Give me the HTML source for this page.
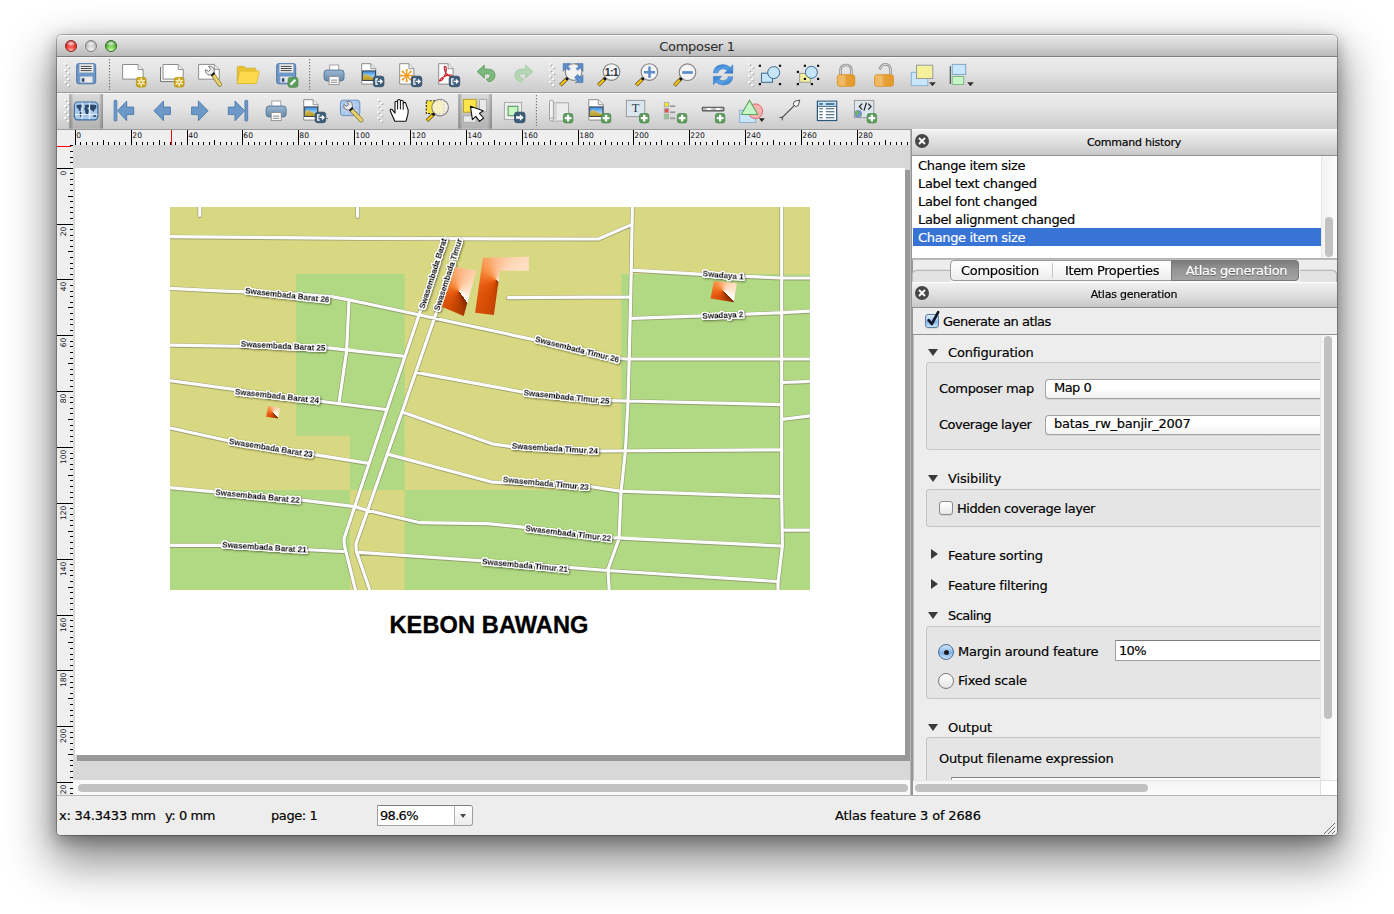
<!DOCTYPE html>
<html><head><meta charset="utf-8"><title>Composer 1</title>
<style>
*{box-sizing:border-box;margin:0;padding:0}
html,body{width:1394px;height:914px;overflow:hidden;background:#fff}
body{position:relative;font-family:"DejaVu Sans","Liberation Sans",sans-serif;font-size:13px;letter-spacing:-0.27px;color:#000;-webkit-text-stroke:.17px}
.a{position:absolute}
svg{overflow:hidden}
svg text{font-family:"DejaVu Sans","Liberation Sans",sans-serif}
svg .ml text{font-family:"Liberation Sans",sans-serif}
#win{left:57px;top:35px;width:1280px;height:800px;border-radius:5px 5px 4px 4px;background:#ededed;
 box-shadow:0 0 0 1px rgba(0,0,0,.26),0 22px 46px 6px rgba(0,0,0,.46),0 5px 16px 1px rgba(0,0,0,.3)}
#title{left:57px;top:35px;width:1280px;height:22px;border-radius:5px 5px 0 0;background:linear-gradient(#e9e9e9,#cfcfcf 60%,#b9b9b9);border-bottom:1px solid #7c7c7c;box-shadow:inset 0 1px 0 #f6f6f6}
#title span{left:0;width:1280px;top:2.5px;text-align:center;font-size:13px;color:#303030;letter-spacing:-0.3px;-webkit-text-stroke:.08px}
.tl{width:12px;height:12px;border-radius:6px;top:5px}
.tbar{left:57px;width:1280px;height:36px;background:linear-gradient(#ececec,#e4e4e4 40%,#cbcbcb);border-bottom:1px solid #9c9c9c;box-shadow:inset 0 1px 0 #f6f6f6}
#status{left:57px;top:795px;width:1280px;height:40px;background:#ededed;border-top:1px solid #b4b4b4;border-radius:0 0 4px 4px}
.t{white-space:nowrap;line-height:16px;margin-top:1px}
.dt{left:912px;width:425px;background:linear-gradient(#f1f1f1,#dcdcdc 55%,#c8c8c8);border-top:1px solid #fcfcfc;border-bottom:1px solid #8e8e8e}
.dt span{left:9.5px;width:100%;text-align:center;font-size:11px;letter-spacing:-0.28px;line-height:14px}
.cb{width:14px;height:14px}
.row{left:913px;width:408px;height:18px;padding-left:5px;line-height:19px;white-space:nowrap}
.gb{border:1px solid #c6c6c6;border-right:none;border-radius:4px 0 0 4px;background:#e5e5e5;left:926px;width:394px}
.combo{height:20px;border:1px solid #a3a3a3;border-right:none;border-radius:4px 0 0 4px;background:linear-gradient(#fff,#fff 45%,#f1f1f1);box-shadow:0 1px 0 rgba(0,0,0,.08);padding-left:8px;line-height:16px;white-space:nowrap}
.tri-d{width:0;height:0;border-left:5.5px solid transparent;border-right:5.5px solid transparent;border-top:7px solid #3a3a3a}
.tri-r{width:0;height:0;border-top:5.5px solid transparent;border-bottom:5.5px solid transparent;border-left:7px solid #3a3a3a}
.chk{width:14px;height:14px;border:1px solid #8b8b8b;border-radius:3px;background:linear-gradient(#fff,#e9e9e9);box-shadow:0 1px 0 rgba(0,0,0,.08)}
.rad{width:16px;height:16px;border:1px solid #7d7d7d;border-radius:8px;background:linear-gradient(#fff,#e4e4e4)}
</style></head><body>
<div id="win" class="a"></div>
<div id="title" class="a">
 <div class="a tl" style="left:8px;background:radial-gradient(ellipse 55% 34% at 50% 24%,rgba(255,255,255,.85),rgba(255,255,255,0) 100%),radial-gradient(circle at 50% 100%,#ffc6be 0,#ff5d52 34%,#e12c26 60%,#8e1511 100%);border:1px solid #8f2019"></div>
 <div class="a tl" style="left:28px;background:radial-gradient(ellipse 55% 34% at 50% 24%,rgba(255,255,255,.9),rgba(255,255,255,0) 100%),radial-gradient(circle at 50% 100%,#f6f6f6 0,#dedede 34%,#bfbfbf 60%,#7c7c7c 100%);border:1px solid #7e7e7e"></div>
 <div class="a tl" style="left:48px;background:radial-gradient(ellipse 55% 34% at 50% 24%,rgba(255,255,255,.85),rgba(255,255,255,0) 100%),radial-gradient(circle at 50% 100%,#dcf9c6 0,#90dd6c 34%,#50b132 60%,#205f15 100%);border:1px solid #2f6f22"></div>
 <span class="a t" style="letter-spacing:-0.31px">Composer 1</span>
</div>
<div id="tb1" class="a tbar" style="top:57px"></div>
<div id="tb2" class="a tbar" style="top:93px;height:37px"></div>
<svg class="a" style="left:57px;top:57px" width="1280" height="72" viewBox="57 57 1280 72"><defs><linearGradient id="gpr" x1="0" y1="0" x2="0" y2="1"><stop offset="0" stop-color="#9db7d0"/><stop offset="1" stop-color="#6488ac"/></linearGradient><linearGradient id="gsky" x1="0" y1="0" x2="0" y2="1"><stop offset="0" stop-color="#2f86dc"/><stop offset=".7" stop-color="#b8dcf6"/><stop offset="1" stop-color="#e8f2f8"/></linearGradient><linearGradient id="ghill" x1="0" y1="0" x2="0" y2="1"><stop offset="0" stop-color="#d6c266"/><stop offset="1" stop-color="#b89a22"/></linearGradient><linearGradient id="glock" x1="0" y1="0" x2="1" y2="0"><stop offset="0" stop-color="#f0b559"/><stop offset=".35" stop-color="#efbc6c"/><stop offset=".55" stop-color="#e6a035"/><stop offset="1" stop-color="#e39a2c"/></linearGradient><linearGradient id="gref" x1="0" y1="0" x2="1" y2="1"><stop offset="0" stop-color="#2f78cc"/><stop offset=".5" stop-color="#5aa0e6"/><stop offset="1" stop-color="#2f78cc"/></linearGradient><linearGradient id="gpress" x1="0" y1="0" x2="0" y2="1"><stop offset="0" stop-color="#dadada"/><stop offset="1" stop-color="#b2b2b2"/></linearGradient><linearGradient id="gpe" x1="0" y1="0" x2="1" y2="0"><stop offset="0" stop-color="#000" stop-opacity=".28"/><stop offset=".12" stop-color="#000" stop-opacity="0"/><stop offset=".88" stop-color="#000" stop-opacity="0"/><stop offset="1" stop-color="#000" stop-opacity=".28"/></linearGradient></defs><g><rect x="65.3" y="100.2" width="1.9" height="1.9" fill="#b4b4b4"/><rect x="64.2" y="99.1" width="1.9" height="1.9" fill="#fcfcfc"/><rect x="68.3" y="103.2" width="1.9" height="1.9" fill="#b4b4b4"/><rect x="67.2" y="102.1" width="1.9" height="1.9" fill="#fcfcfc"/><rect x="65.3" y="106.2" width="1.9" height="1.9" fill="#b4b4b4"/><rect x="64.2" y="105.1" width="1.9" height="1.9" fill="#fcfcfc"/><rect x="68.3" y="109.2" width="1.9" height="1.9" fill="#b4b4b4"/><rect x="67.2" y="108.1" width="1.9" height="1.9" fill="#fcfcfc"/><rect x="65.3" y="112.2" width="1.9" height="1.9" fill="#b4b4b4"/><rect x="64.2" y="111.1" width="1.9" height="1.9" fill="#fcfcfc"/><rect x="68.3" y="115.2" width="1.9" height="1.9" fill="#b4b4b4"/><rect x="67.2" y="114.1" width="1.9" height="1.9" fill="#fcfcfc"/><rect x="65.3" y="118.2" width="1.9" height="1.9" fill="#b4b4b4"/><rect x="64.2" y="117.1" width="1.9" height="1.9" fill="#fcfcfc"/><rect x="68.3" y="121.2" width="1.9" height="1.9" fill="#b4b4b4"/><rect x="67.2" y="120.1" width="1.9" height="1.9" fill="#fcfcfc"/><rect x="69.4" y="94" width="33.6" height="34.6" fill="url(#gpress)"/><rect x="69.4" y="94" width="33.6" height="34.6" fill="url(#gpe)"/><rect x="74.300" y="102" width="23.600" height="17.800" rx="3.600" fill="#a9c9ea" stroke="#3a6a9c" stroke-width="1.2"/><path d="M76.6 105.1L81.6 104.6L82.6 107.1L80.6 108.6L81.1 110.6L79.3 111.1L78.1 108.6L76.6 107.6ZM79.9 111.6L82.1 112.6L81.6 115.6L80.3 117.6L79.6 114.6ZM84.6 105.1L88.6 104.6L89.1 107.1L87.1 108.1L88.9 110.1L88.3 113.6L86.9 116.1L85.6 113.6L85.1 110.6L84.1 108.6L85.3 107.1ZM89.6 104.6L96.2 105.1L96.4 108.1L94.7 109.6L93.7 112.1L92.2 110.6L90.6 110.1L89.6 107.6ZM93.2 114.9L96.0 114.6L96.2 116.6L93.7 116.9Z" fill="#27486b"/><path d="M82.100 102.600V119.200M89.600 102.600V119.200M74.900 114.600H97.300" stroke="#f2f7fc" stroke-width="1" fill="none"/><rect x="114.100" y="100.300" width="2.800" height="20.800" rx=".8" fill="#6d99c9" stroke="#4c79ab" stroke-width=".8"/><path d="M117.6 110.7L126.7 101V107.1H133.7V114.6H126.7V120.8Z" fill="#6d99c9" stroke="#4c79ab" stroke-width=".9" stroke-linejoin="round"/><path d="M154 110.7L163.5 101V107.1H170.4V114.6H163.5V120.8Z" fill="#6d99c9" stroke="#4c79ab" stroke-width=".9" stroke-linejoin="round"/><path d="M208.100 110.700L198.400 101V107.100H191.600V114.600H198.400V120.800Z" fill="#6d99c9" stroke="#4c79ab" stroke-width=".9" stroke-linejoin="round"/><path d="M244.600 110.700L235 101V107.100H228.300V114.600H235V120.800Z" fill="#6d99c9" stroke="#4c79ab" stroke-width=".9" stroke-linejoin="round"/><rect x="244.900" y="100.300" width="2.800" height="20.800" rx=".8" fill="#6d99c9" stroke="#4c79ab" stroke-width=".8"/><rect x="271.8" y="101" width="9" height="7.5" fill="#fff" stroke="#9a9a9a" stroke-width=".9"/><rect x="266.2" y="106.1" width="19.9" height="10.8" rx="2.8" fill="url(#gpr)" stroke="#58789a" stroke-width="1"/><rect x="271.2" y="112.6" width="10" height="8" fill="#fff" stroke="#8d8d8d" stroke-width=".9"/><path d="M273 116.1h6.4M273 118.3h6.4" stroke="#8a8a8a" stroke-width="1" fill="none"/><path d="M303.7 99.7H313.1L318.1 104.7V120.1H303.7Z" fill="#fff" stroke="#8c8c8c" stroke-width="1"/><path d="M313.1 99.7V104.7H318.1" fill="#ececec" stroke="#8c8c8c" stroke-width=".9" stroke-linejoin="round"/><rect x="304.6" y="106.9" width="13.1" height="9.6" fill="url(#gsky)" stroke="#3c4650" stroke-width="1"/><path d="M305.1 116V112.1L307.8 109.7L311.1 111.7L317.2 114.3V116Z" fill="url(#ghill)"/><rect x="315.2" y="112.2" width="10.5" height="10.5" rx="2.4" fill="#3e5d79" stroke="#2d4b66" stroke-width=".8"/><path d="M319.8 114.8H317.8V120.1H319.8" stroke="#fff" stroke-width="1.3" fill="none"/><path d="M319.4 117.45H323.8M321.9 115.4L324 117.45L321.9 119.5" stroke="#fff" stroke-width="1.3" fill="none"/><path d="M326.200 118H328L327.100 119.200Z" fill="#333"/><rect x="340.400" y="100.200" width="19.400" height="15.400" rx="2.600" fill="#a9c5e9" stroke="#6c92c2" stroke-width="1"/><path d="M346.600 100.800V115M353.800 100.800V115M341 105.200H359.200M341 110.600H359.200" stroke="#c9dcf2" stroke-width=".8" fill="none"/><path d="M351.2 109.8L361.3 120.2" stroke="#7a6a2c" stroke-width="4.4" stroke-linecap="round"/><path d="M351.4 110L361.3 120.2" stroke="#e6d16c" stroke-width="3.1" stroke-linecap="round"/><path d="M346.8 101.4A4.4 4.4 0 1 1 343.8 104.6L346.8 106.4L348.9 104.3Z" fill="#ececec" stroke="#6a6a6a" stroke-width=".9" stroke-linejoin="round"/><path d="M349.7 110.7L352.9 107.7" stroke="#1a1a1a" stroke-width="1.9"/><rect x="378.4" y="100.2" width="1.9" height="1.9" fill="#b4b4b4"/><rect x="377.3" y="99.1" width="1.9" height="1.9" fill="#fcfcfc"/><rect x="381.4" y="103.2" width="1.9" height="1.9" fill="#b4b4b4"/><rect x="380.3" y="102.1" width="1.9" height="1.9" fill="#fcfcfc"/><rect x="378.4" y="106.2" width="1.9" height="1.9" fill="#b4b4b4"/><rect x="377.3" y="105.1" width="1.9" height="1.9" fill="#fcfcfc"/><rect x="381.4" y="109.2" width="1.9" height="1.9" fill="#b4b4b4"/><rect x="380.3" y="108.1" width="1.9" height="1.9" fill="#fcfcfc"/><rect x="378.4" y="112.2" width="1.9" height="1.9" fill="#b4b4b4"/><rect x="377.3" y="111.1" width="1.9" height="1.9" fill="#fcfcfc"/><rect x="381.4" y="115.2" width="1.9" height="1.9" fill="#b4b4b4"/><rect x="380.3" y="114.1" width="1.9" height="1.9" fill="#fcfcfc"/><rect x="378.4" y="118.2" width="1.9" height="1.9" fill="#b4b4b4"/><rect x="377.3" y="117.1" width="1.9" height="1.9" fill="#fcfcfc"/><rect x="381.4" y="121.2" width="1.9" height="1.9" fill="#b4b4b4"/><rect x="380.3" y="120.1" width="1.9" height="1.9" fill="#fcfcfc"/><path d="M394.800 121.200C393.400 117.600 391.200 113.600 390.200 110.800C389.800 109.400 391.400 108.600 392.400 109.800L395 113.200V102.600C395 100.800 397.600 100.800 397.600 102.600V100.800C397.600 99 400.400 99 400.400 100.800V101.600C400.400 99.800 403.200 99.800 403.200 101.600V103.600C403.200 102 405.800 102 405.800 103.600L408.200 110.200C408.400 114.600 406.800 117.600 406 121.200Z" fill="#fff" stroke="#111" stroke-width="1.1" stroke-linejoin="round"/><path d="M397.600 102.600V109.400M400.400 101.600V109.400M403.200 103.600V109.800" stroke="#111" stroke-width="1" fill="none"/><rect x="426.300" y="100.700" width="17.600" height="12.800" fill="#f6e23f" stroke="#222" stroke-width="1.1" stroke-dasharray="2 1.4"/><path d="M433.7 114L426.9 120.8" stroke="#5a4a10" stroke-width="3.6" stroke-linecap="butt"/><path d="M433.5 114.2L427.2 120.5" stroke="#f5c518" stroke-width="2.3" stroke-linecap="butt"/><circle cx="440.1" cy="107.6" r="8.3" fill="rgba(246,243,228,.82)" stroke="#808080" stroke-width="1.1"/><circle cx="433.5" cy="114.3" r="1.5" fill="#111"/><rect x="458.3" y="94" width="33.6" height="34.6" fill="url(#gpress)"/><rect x="458.3" y="94" width="33.6" height="34.6" fill="url(#gpe)"/><rect x="463.400" y="99.400" width="12.800" height="12.800" fill="#fbe54a" stroke="#b9a224" stroke-width="1"/><rect x="479.400" y="99.400" width="7.300" height="12.400" fill="#e9e9e9" stroke="#aaa" stroke-width="1"/><rect x="463.400" y="115.800" width="12.800" height="6.500" fill="#e9e9e9" stroke="#aaa" stroke-width="1"/><path d="M470.400 106.200L472.400 119.600L475.800 116.400L479.600 121.400L483.600 118L479.400 113.400L483.200 110.800Z" fill="#fff" stroke="#111" stroke-width="1.1" stroke-linejoin="round"/><rect x="504.400" y="102.400" width="17.200" height="17.200" fill="#eee" stroke="#aaa" stroke-width="1"/><rect x="508.100" y="106.300" width="9.800" height="9.300" fill="#c7f6c7" stroke="#5b9b5c" stroke-width="1.100"/><rect x="514.5" y="112.2" width="10.5" height="10.5" rx="2.4" fill="#3e5d79" stroke="#2d4b66" stroke-width=".8"/><path d="M516.1 116.2H519.9V114.2L523.7 117.45L519.9 120.7V118.7H516.1Z" fill="#fff"/><path d="M536.4 95.2V126" stroke="#4a4a4a" stroke-width="1.1" stroke-dasharray="1.1 1.9" fill="none"/><path d="M552.600 102.800H568.600V121H550.800" fill="#ececec" stroke="#a9a9a9" stroke-width="1"/><path d="M553.200 102.800H557V121H553.200Z" fill="#d6d6d6"/><path d="M553.400 118.600V102Q553.200 100.200 551.400 100.200Q549.600 100.200 549.500 102V119Q549.500 121 551.400 121Q553.400 121 553.400 119Q553.200 117.800 551.800 117.800Q550.600 117.800 550.400 119" fill="#f3f3f3" stroke="#a3a3a3" stroke-width="1"/><rect x="563.4" y="113.5" width="9.4" height="9.4" rx="2.2" fill="#5c9b5c" stroke="#4b8a4d" stroke-width=".8"/><path d="M568.1 114.8V121.6M564.7 118.2H571.5" stroke="#fff" stroke-width="2.3" fill="none"/><path d="M588.8 99.7H598.3L603.3 104.7V120.1H588.8Z" fill="#fff" stroke="#8c8c8c" stroke-width="1"/><path d="M598.3 99.7V104.7H603.3" fill="#ececec" stroke="#8c8c8c" stroke-width=".9" stroke-linejoin="round"/><rect x="589.7" y="106.9" width="13.2" height="9.6" fill="url(#gsky)" stroke="#3c4650" stroke-width="1"/><path d="M590.2 116V112.1L592.9 109.7L596.2 111.7L602.4 114.3V116Z" fill="url(#ghill)"/><rect x="601.4" y="113.5" width="9.4" height="9.4" rx="2.2" fill="#5c9b5c" stroke="#4b8a4d" stroke-width=".8"/><path d="M606.1 114.8V121.6M602.7 118.2H609.5" stroke="#fff" stroke-width="2.3" fill="none"/><rect x="626.400" y="100.400" width="18.400" height="16.200" fill="#dce6ef" stroke="#9a9a9a" stroke-width="1"/><text x="635.600" y="112.200" text-anchor="middle" font-size="12.500" fill="#2c3a44" style="letter-spacing:0;font-family:'Liberation Serif',serif">T</text><rect x="639.5" y="113.5" width="9.4" height="9.4" rx="2.2" fill="#5c9b5c" stroke="#4b8a4d" stroke-width=".8"/><path d="M644.2 114.8V121.6M640.8 118.2H647.6" stroke="#fff" stroke-width="2.3" fill="none"/><rect x="664.300" y="102.4" width="4.400" height="4.400" fill="#f6e922" stroke="#aaa" stroke-width=".9"/><path d="M670 106.2H675.300" stroke="#999" stroke-width="1.700"/><rect x="664.300" y="108.45" width="4.400" height="4.400" fill="#e05252" stroke="#aaa" stroke-width=".9"/><path d="M670 112.25H675.300" stroke="#999" stroke-width="1.700"/><rect x="664.300" y="114.5" width="4.400" height="4.400" fill="#8cc98c" stroke="#aaa" stroke-width=".9"/><path d="M670 118.3H675.300" stroke="#999" stroke-width="1.700"/><rect x="677.4" y="113.5" width="9.4" height="9.4" rx="2.2" fill="#5c9b5c" stroke="#4b8a4d" stroke-width=".8"/><path d="M682.1 114.8V121.6M678.7 118.2H685.5" stroke="#fff" stroke-width="2.3" fill="none"/><rect x="702.300" y="107.300" width="21.600" height="3.600" rx=".6" fill="#bdbdbd" stroke="#4e4e4e" stroke-width="1.100"/><path d="M706.800 109.100H711.200M716 109.100H720.400" stroke="#fff" stroke-width="1.600"/><rect x="715.4" y="113.5" width="9.4" height="9.4" rx="2.2" fill="#5c9b5c" stroke="#4b8a4d" stroke-width=".8"/><path d="M720.1 114.8V121.6M716.7 118.2H723.5" stroke="#fff" stroke-width="2.3" fill="none"/><rect x="739.600" y="110.300" width="16" height="12.200" fill="#c9e6fa" stroke="#8cb2d2" stroke-width="1"/><circle cx="755.300" cy="111.200" r="7.300" fill="#f9b3b3" stroke="#e26464" stroke-width="1"/><path d="M749.500 100.200L757.800 114.500H741.300Z" fill="#c7f6c7" stroke="#5ba25c" stroke-width="1.100" stroke-linejoin="round"/><path d="M759 118.200H764.600L761.800 122Z" fill="#222"/><path d="M781.600 118.200L797 102.800" stroke="#444" stroke-width="1.100"/><path d="M799.800 100L798.400 105.400L795.600 106.600L793.200 104.200L794.400 101.400Z" fill="#f4f4f4" stroke="#444" stroke-width=".9" stroke-linejoin="round"/><path d="M779.400 117.600L782.600 117.200L782.200 120.400" fill="none" stroke="#444" stroke-width=".9"/><rect x="817.400" y="101.200" width="19.300" height="19.300" fill="#fff" stroke="#2b5679" stroke-width="1.200"/><rect x="818" y="101.800" width="18.100" height="4.400" fill="#c9e6fa"/><path d="M817.400 106.400H836.700" stroke="#2b5679" stroke-width=".9"/><path d="M819.300 104H822.800M825.800 104H834.400" stroke="#2b5679" stroke-width="1.700"/><path d="M819.300 108.7H822.800M825.800 108.7H834.400M819.300 111.7H822.800M825.800 111.7H834.400M819.300 114.7H822.800M825.800 114.7H834.400M819.300 117.7H822.800M825.800 117.7H834.400" stroke="#2b5679" stroke-width="1.100"/><rect x="854.400" y="100.400" width="19.400" height="17.200" fill="#dce6ef" stroke="#9a9a9a" stroke-width="1"/><path d="M862.200 103.600L859.400 106.600L862.200 109.600M868.200 103.600L871 106.600L868.200 109.600M866.400 102.600L864 110.600" fill="none" stroke="#2a2a2a" stroke-width="1.300"/><circle cx="858.200" cy="113.800" r="3.800" fill="#7c8ce0"/><path d="M855.200 112.200Q856.600 110.400 858.800 110.600L859.400 112.800L857 114.200L857.600 116.800Q855.400 116.200 855.200 112.200ZM860.400 113.600L861.800 114.200L860.800 116.600L859.600 115.400Z" fill="#6ab84f"/><rect x="867.2" y="113.5" width="9.4" height="9.4" rx="2.2" fill="#5c9b5c" stroke="#4b8a4d" stroke-width=".8"/><path d="M871.9 114.8V121.6M868.5 118.2H875.3" stroke="#fff" stroke-width="2.3" fill="none"/></g>
<g><rect x="65.3" y="64.2" width="1.9" height="1.9" fill="#b4b4b4"/><rect x="64.2" y="63.1" width="1.9" height="1.9" fill="#fcfcfc"/><rect x="68.3" y="67.2" width="1.9" height="1.9" fill="#b4b4b4"/><rect x="67.2" y="66.1" width="1.9" height="1.9" fill="#fcfcfc"/><rect x="65.3" y="70.2" width="1.9" height="1.9" fill="#b4b4b4"/><rect x="64.2" y="69.1" width="1.9" height="1.9" fill="#fcfcfc"/><rect x="68.3" y="73.2" width="1.9" height="1.9" fill="#b4b4b4"/><rect x="67.2" y="72.1" width="1.9" height="1.9" fill="#fcfcfc"/><rect x="65.3" y="76.2" width="1.9" height="1.9" fill="#b4b4b4"/><rect x="64.2" y="75.1" width="1.9" height="1.9" fill="#fcfcfc"/><rect x="68.3" y="79.2" width="1.9" height="1.9" fill="#b4b4b4"/><rect x="67.2" y="78.1" width="1.9" height="1.9" fill="#fcfcfc"/><rect x="65.3" y="82.2" width="1.9" height="1.9" fill="#b4b4b4"/><rect x="64.2" y="81.1" width="1.9" height="1.9" fill="#fcfcfc"/><rect x="68.3" y="85.2" width="1.9" height="1.9" fill="#b4b4b4"/><rect x="67.2" y="84.1" width="1.9" height="1.9" fill="#fcfcfc"/><rect x="76.7" y="63.6" width="19" height="20.2" rx="2.2" fill="#6c97c9" stroke="#4a75a8" stroke-width="1"/><rect x="79.3" y="64.1" width="14" height="8.6" fill="#f2f2f2" stroke="#a9b6c6" stroke-width=".6"/><path d="M80.7 66.4h11M80.7 68.5h11M80.7 70.6h11" stroke="#444" stroke-width="1" fill="none"/><rect x="80.1" y="76.5" width="12.5" height="6.3" fill="#e9e9e9" stroke="#9fb0c4" stroke-width=".5"/><rect x="81.8" y="78.2" width="2.6" height="3.6" fill="#2f4f7a"/><path d="M109.5 59.2V90" stroke="#4a4a4a" stroke-width="1.1" stroke-dasharray="1.1 1.9" fill="none"/><path d="M122.6 64.5H138.1L143.1 69.5V79.1H122.6Z" fill="#fff" stroke="#8c8c8c" stroke-width="1"/><path d="M138.1 64.5V69.5H143.1" fill="#ececec" stroke="#8c8c8c" stroke-width=".9" stroke-linejoin="round"/><rect x="136.4" y="77.4" width="9.6" height="9.6" rx="2.2" fill="#c9a51c" stroke="#b8940f" stroke-width=".8"/><path d="M141.2 82.2L144.23 83.95M141.2 82.2L141.2 85.7M141.2 82.2L138.17 83.95M141.2 82.2L138.17 80.45M141.2 82.2L141.2 78.7M141.2 82.2L144.23 80.45" stroke="#fff8dc" stroke-width="1.5" stroke-linecap="round" fill="none"/><circle cx="141.2" cy="82.2" r="1.1" fill="#c9a51c"/><path d="M160.5 67V81.6H180.7V79.4" fill="#f4f4f4" stroke="#777" stroke-width="1"/><path d="M163 64.5H178.2L183.2 69.5V79.1H163Z" fill="#fff" stroke="#8c8c8c" stroke-width="1"/><path d="M178.2 64.5V69.5H183.2" fill="#ececec" stroke="#8c8c8c" stroke-width=".9" stroke-linejoin="round"/><rect x="174.4" y="77.4" width="9.6" height="9.6" rx="2.2" fill="#c9a51c" stroke="#b8940f" stroke-width=".8"/><path d="M179.2 82.2L182.23 83.95M179.2 82.2L179.2 85.7M179.2 82.2L176.17 83.95M179.2 82.2L176.17 80.45M179.2 82.2L179.2 78.7M179.2 82.2L182.23 80.45" stroke="#fff8dc" stroke-width="1.5" stroke-linecap="round" fill="none"/><circle cx="179.2" cy="82.2" r="1.1" fill="#c9a51c"/><path d="M198.6 64.4H214.3L219.3 69.4V79.2H198.6Z" fill="#fff" stroke="#8c8c8c" stroke-width="1"/><path d="M214.3 64.4V69.4H219.3" fill="#ececec" stroke="#8c8c8c" stroke-width=".9" stroke-linejoin="round"/><path d="M213 74.8L219.8 84.4" stroke="#7a6a2c" stroke-width="4.4" stroke-linecap="round"/><path d="M213.2 75L219.8 84.4" stroke="#e6d16c" stroke-width="3.1" stroke-linecap="round"/><path d="M208.6 66.4A4.4 4.4 0 1 1 205.6 69.6L208.6 71.4L210.7 69.3Z" fill="#ececec" stroke="#6a6a6a" stroke-width=".9" stroke-linejoin="round"/><path d="M211.5 75.7L214.7 72.7" stroke="#1a1a1a" stroke-width="1.9"/><path d="M237.3 83.2V67.6Q237.3 66.4 238.5 66.4H243.6Q244.6 66.4 245 67.3L245.4 68.2H254.6Q255.8 68.200 255.8 69.4V83.2Z" fill="#e9c330" stroke="#d0ab25" stroke-width=".8"/><path d="M240.3 71.1H258.600Q259.4 71.1 259.2 71.900L256.6 83Q256.4 83.600 255.7 83.600H237.8Q237 83.600 237.2 82.800L239.5 71.800Q239.7 71.100 240.3 71.100Z" fill="#fdda4c" stroke="#d9b52e" stroke-width=".8"/><rect x="276.7" y="63.6" width="19" height="20.2" rx="2.2" fill="#6c97c9" stroke="#4a75a8" stroke-width="1"/><rect x="279.3" y="64.1" width="14" height="8.6" fill="#f2f2f2" stroke="#a9b6c6" stroke-width=".6"/><path d="M280.7 66.4h11M280.7 68.5h11M280.7 70.6h11" stroke="#444" stroke-width="1" fill="none"/><rect x="280.1" y="76.5" width="12.5" height="6.3" fill="#e9e9e9" stroke="#9fb0c4" stroke-width=".5"/><rect x="281.8" y="78.2" width="2.6" height="3.6" fill="#2f4f7a"/><rect x="288" y="77.4" width="9.9" height="9.9" rx="2.2" fill="#5c9b5c" stroke="#4b8a4d" stroke-width=".8"/><path d="M290.6 84.600L295.4 79.800" stroke="#fff" stroke-width="2.2" stroke-linecap="butt"/><path d="M309.6 59.2V90" stroke="#4a4a4a" stroke-width="1.1" stroke-dasharray="1.1 1.9" fill="none"/><rect x="329.7" y="65" width="9" height="7.5" fill="#fff" stroke="#9a9a9a" stroke-width=".9"/><rect x="324.1" y="70.1" width="19.9" height="10.8" rx="2.8" fill="url(#gpr)" stroke="#58789a" stroke-width="1"/><rect x="329.1" y="76.6" width="10" height="8" fill="#fff" stroke="#8d8d8d" stroke-width=".9"/><path d="M330.9 80.1h6.4M330.9 82.3h6.4" stroke="#8a8a8a" stroke-width="1" fill="none"/><path d="M361.7 63.7H370.8L375.8 68.7V84.1H361.7Z" fill="#fff" stroke="#8c8c8c" stroke-width="1"/><path d="M370.8 63.7V68.7H375.8" fill="#ececec" stroke="#8c8c8c" stroke-width=".9" stroke-linejoin="round"/><rect x="362.6" y="70.9" width="12.9" height="9.6" fill="url(#gsky)" stroke="#3c4650" stroke-width="1"/><path d="M363.1 80V76.1L365.8 73.7L369.1 75.7L375 78.3V80Z" fill="url(#ghill)"/><rect x="373.4" y="76.2" width="10.5" height="10.5" rx="2.4" fill="#3e5d79" stroke="#2d4b66" stroke-width=".8"/><path d="M378 78.8H376V84.1H378" stroke="#fff" stroke-width="1.3" fill="none"/><path d="M377.6 81.45H382M380.1 79.4L382.2 81.45L380.1 83.5" stroke="#fff" stroke-width="1.3" fill="none"/><path d="M399.7 63.7H408.9L413.9 68.7V84.1H399.7Z" fill="#fff" stroke="#8c8c8c" stroke-width="1"/><path d="M408.9 63.7V68.7H413.9" fill="#ececec" stroke="#8c8c8c" stroke-width=".9" stroke-linejoin="round"/><path d="M408.3 75.6L412.1 75.6M407.83 76.73L410.52 79.42M406.7 77.2L406.7 81M405.57 76.73L402.88 79.42M405.1 75.6L401.3 75.6M405.57 74.47L402.88 71.78M406.7 74L406.7 70.2M407.83 74.47L410.52 71.78" stroke="#f19a1c" stroke-width="1.3" stroke-linecap="round" fill="none"/><circle cx="412.3" cy="75.6" r="1.1" fill="#f19a1c"/><circle cx="410.66" cy="79.56" r="1.1" fill="#f19a1c"/><circle cx="406.7" cy="81.2" r="1.1" fill="#f19a1c"/><circle cx="402.74" cy="79.56" r="1.1" fill="#f19a1c"/><circle cx="401.1" cy="75.6" r="1.1" fill="#f19a1c"/><circle cx="402.74" cy="71.64" r="1.1" fill="#f19a1c"/><circle cx="406.7" cy="70" r="1.1" fill="#f19a1c"/><circle cx="410.66" cy="71.64" r="1.1" fill="#f19a1c"/><circle cx="406.7" cy="75.6" r="1.6" fill="#f19a1c"/><rect x="411.3" y="76.2" width="10.5" height="10.5" rx="2.4" fill="#3e5d79" stroke="#2d4b66" stroke-width=".8"/><path d="M415.9 78.8H413.9V84.1H415.9" stroke="#fff" stroke-width="1.3" fill="none"/><path d="M415.5 81.45H419.9M418 79.4L420.1 81.45L418 83.5" stroke="#fff" stroke-width="1.3" fill="none"/><path d="M438.7 63.7H448.1L453.1 68.7V84.1H438.7Z" fill="#fff" stroke="#8c8c8c" stroke-width="1"/><path d="M448.1 63.7V68.7H453.1" fill="#ececec" stroke="#8c8c8c" stroke-width=".9" stroke-linejoin="round"/><path d="M444.800 66.400C446.600 66 446.600 70 445.600 73.200C444.600 76.600 442.200 80.200 440.400 81C438.800 81.600 439.400 79.400 442.400 77.600C445.400 75.800 449.600 74.600 451.600 75.200C453 75.800 451.600 77 449.600 76.200C447.200 75.200 445 71.600 444.400 69C444 67.400 444.200 66.600 444.800 66.400Z" fill="none" stroke="#c4262c" stroke-width="1.2" stroke-linejoin="round"/><rect x="449.2" y="76.2" width="10.5" height="10.5" rx="2.4" fill="#3e5d79" stroke="#2d4b66" stroke-width=".8"/><path d="M453.8 78.8H451.8V84.1H453.8" stroke="#fff" stroke-width="1.3" fill="none"/><path d="M453.4 81.45H457.8M455.9 79.4L458 81.45L455.9 83.5" stroke="#fff" stroke-width="1.3" fill="none"/><path d="M477.200 71.600L484.300 65.200V69.200H488.400Q495 69.400 495 75.400Q494.800 80.800 488.600 81.800L486.400 79.300Q490.600 78.400 490.400 75.600Q490.200 73.800 488 73.800H484.300V78Z" fill="#7db97d" stroke="#5c9c5e" stroke-width=".9" stroke-linejoin="round"/><path d="M532.800 71.600L525.700 65.200V69.200H521.600Q515 69.400 515 75.400Q515.200 80.800 521.400 81.800L523.600 79.300Q519.400 78.400 519.600 75.600Q519.800 73.800 522 73.800H525.700V78Z" fill="#b5d5b5" stroke="#a3c9a4" stroke-width=".9" stroke-linejoin="round"/><rect x="550.3" y="64.2" width="1.9" height="1.9" fill="#b4b4b4"/><rect x="549.2" y="63.1" width="1.9" height="1.9" fill="#fcfcfc"/><rect x="553.3" y="67.2" width="1.9" height="1.9" fill="#b4b4b4"/><rect x="552.2" y="66.1" width="1.9" height="1.9" fill="#fcfcfc"/><rect x="550.3" y="70.2" width="1.9" height="1.9" fill="#b4b4b4"/><rect x="549.2" y="69.1" width="1.9" height="1.9" fill="#fcfcfc"/><rect x="553.3" y="73.2" width="1.9" height="1.9" fill="#b4b4b4"/><rect x="552.2" y="72.1" width="1.9" height="1.9" fill="#fcfcfc"/><rect x="550.3" y="76.2" width="1.9" height="1.9" fill="#b4b4b4"/><rect x="549.2" y="75.1" width="1.9" height="1.9" fill="#fcfcfc"/><rect x="553.3" y="79.2" width="1.9" height="1.9" fill="#b4b4b4"/><rect x="552.2" y="78.1" width="1.9" height="1.9" fill="#fcfcfc"/><rect x="550.3" y="82.2" width="1.9" height="1.9" fill="#b4b4b4"/><rect x="549.2" y="81.1" width="1.9" height="1.9" fill="#fcfcfc"/><rect x="553.3" y="85.2" width="1.9" height="1.9" fill="#b4b4b4"/><rect x="552.2" y="84.1" width="1.9" height="1.9" fill="#fcfcfc"/><path d="M563.2 63.600H571L568.700 65.900L571.600 68.800L568.600 71.800L565.600 68.900L563.200 71.300Z" fill="#5c8cc9" stroke="#4672a8" stroke-width=".6"/><path d="M583 63.600H575.200L577.500 65.900L574.600 68.800L577.600 71.800L580.600 68.900L583 71.300Z" fill="#5c8cc9" stroke="#4672a8" stroke-width=".6"/><path d="M567.2 78.5L560.4 85.3" stroke="#5a4a10" stroke-width="3.6" stroke-linecap="butt"/><path d="M567 78.7L560.7 85" stroke="#f5c518" stroke-width="2.3" stroke-linecap="butt"/><circle cx="573.6" cy="72.1" r="8.3" fill="#f3f3f3" stroke="#808080" stroke-width="1.1"/><circle cx="567" cy="78.8" r="1.5" fill="#111"/><path d="M565.400 65.600L569.600 69.800M581 65.600L576.800 69.800" stroke="#5c8cc9" stroke-width="3" /><path d="M583 82.600H575.200L577.500 80.300L574.600 77.400L577.600 74.400L580.600 77.300L583 74.900Z" fill="#5c8cc9" stroke="#4672a8" stroke-width=".6"/><path d="M605.1 78.5L598.3 85.3" stroke="#5a4a10" stroke-width="3.6" stroke-linecap="butt"/><path d="M604.9 78.7L598.6 85" stroke="#f5c518" stroke-width="2.3" stroke-linecap="butt"/><circle cx="611.5" cy="72.1" r="8.3" fill="#f3f3f3" stroke="#808080" stroke-width="1.1"/><circle cx="604.9" cy="78.8" r="1.5" fill="#111"/><text x="611.4" y="76" text-anchor="middle" font-size="10.5" font-weight="bold" fill="#26323a" style="letter-spacing:-0.7px;font-family:'Liberation Sans',sans-serif">1:1</text><path d="M643 78.5L636.2 85.3" stroke="#5a4a10" stroke-width="3.6" stroke-linecap="butt"/><path d="M642.8 78.7L636.5 85" stroke="#f5c518" stroke-width="2.3" stroke-linecap="butt"/><circle cx="649.4" cy="72.1" r="8.3" fill="#f3f3f3" stroke="#808080" stroke-width="1.1"/><circle cx="642.8" cy="78.8" r="1.5" fill="#111"/><path d="M649.500 66.600V77.800M643.900 72.200H655.100" stroke="#5c8cc9" stroke-width="2.5" fill="none"/><path d="M681.1 78.6L674.3 85.4" stroke="#5a4a10" stroke-width="3.6" stroke-linecap="butt"/><path d="M680.9 78.8L674.6 85.1" stroke="#f5c518" stroke-width="2.3" stroke-linecap="butt"/><circle cx="687.5" cy="72.2" r="8.3" fill="#f3f3f3" stroke="#808080" stroke-width="1.1"/><circle cx="680.9" cy="78.9" r="1.5" fill="#111"/><path d="M682.200 72.500H692.800" stroke="#5c8cc9" stroke-width="2.7" fill="none"/><path d="M713.300 72.800Q714.200 65 722.800 64.600Q727.400 64.600 730.200 67.400L732.800 64.900V73.200H724.600L727.200 70.500Q725.400 68.700 722.800 68.800Q718.600 69.200 718 72.800Z" fill="url(#gref)" stroke="#2f6fb8" stroke-width=".5"/><path d="M732.900 76.800Q732 84.600 723.400 85Q718.800 85 716 82.200L713.400 84.700V76.400H721.600L719 79.100Q720.800 80.900 723.400 80.800Q727.600 80.400 728.200 76.800Z" fill="url(#gref)" stroke="#2f6fb8" stroke-width=".5"/><rect x="749.3" y="64.2" width="1.9" height="1.9" fill="#b4b4b4"/><rect x="748.2" y="63.1" width="1.9" height="1.9" fill="#fcfcfc"/><rect x="752.3" y="67.2" width="1.9" height="1.9" fill="#b4b4b4"/><rect x="751.2" y="66.1" width="1.9" height="1.9" fill="#fcfcfc"/><rect x="749.3" y="70.2" width="1.9" height="1.9" fill="#b4b4b4"/><rect x="748.2" y="69.1" width="1.9" height="1.9" fill="#fcfcfc"/><rect x="752.3" y="73.2" width="1.9" height="1.9" fill="#b4b4b4"/><rect x="751.2" y="72.1" width="1.9" height="1.9" fill="#fcfcfc"/><rect x="749.3" y="76.2" width="1.9" height="1.9" fill="#b4b4b4"/><rect x="748.2" y="75.1" width="1.9" height="1.9" fill="#fcfcfc"/><rect x="752.3" y="79.2" width="1.9" height="1.9" fill="#b4b4b4"/><rect x="751.2" y="78.1" width="1.9" height="1.9" fill="#fcfcfc"/><rect x="749.3" y="82.2" width="1.9" height="1.9" fill="#b4b4b4"/><rect x="748.2" y="81.1" width="1.9" height="1.9" fill="#fcfcfc"/><rect x="752.3" y="85.2" width="1.9" height="1.9" fill="#b4b4b4"/><rect x="751.2" y="84.1" width="1.9" height="1.9" fill="#fcfcfc"/><rect x="761.500" y="73.200" width="11" height="9.100" fill="#c6e5f9" stroke="#3b6a94" stroke-width="1"/><circle cx="773.700" cy="72.600" r="6" fill="#c6e5f9" stroke="#3b6a94" stroke-width="1"/><rect x="758.8" y="64.7" width="2.200" height="2.200" fill="#111"/><rect x="778.9" y="64.7" width="2.200" height="2.200" fill="#111"/><rect x="758.8" y="83" width="2.200" height="2.200" fill="#111"/><rect x="778.9" y="83" width="2.200" height="2.200" fill="#111"/><rect x="799.700" y="73.400" width="10.900" height="8.900" fill="#f5f19a" stroke="#9a9a9a" stroke-width="1"/><circle cx="811.400" cy="72.300" r="6" fill="#c6e5f9" stroke="#3b6a94" stroke-width="1"/><rect x="803.8" y="64.7" width="2.200" height="2.200" fill="#111"/><rect x="817" y="64.7" width="2.200" height="2.200" fill="#111"/><rect x="803.8" y="77.8" width="2.200" height="2.200" fill="#111"/><rect x="817" y="77.8" width="2.200" height="2.200" fill="#111"/><rect x="796.8" y="70.8" width="2.200" height="2.200" fill="#111"/><rect x="796.8" y="83" width="2.200" height="2.200" fill="#111"/><rect x="810.8" y="83" width="2.200" height="2.200" fill="#111"/><path d="M840.600 75V70.600Q840.600 65 846 65Q851.400 65 851.400 70.600V75" fill="none" stroke="#8c8c8c" stroke-width="2.600"/><path d="M840.600 75V70.600Q840.600 65 846 65Q851.400 65 851.400 70.600V75" fill="none" stroke="#e2e2e2" stroke-width="1"/><rect x="837.300" y="74.700" width="17.500" height="11.600" rx="2.600" fill="url(#glock)" stroke="#dc9428" stroke-width=".9"/><path d="M890.600 75V70.200Q890.400 64.400 885 64.200Q881.400 64.400 879.400 69.800" fill="none" stroke="#8c8c8c" stroke-width="2.600"/><path d="M890.600 75V70.200Q890.400 64.400 885 64.200Q881.400 64.400 879.400 69.800" fill="none" stroke="#e2e2e2" stroke-width="1"/><rect x="874.500" y="74.700" width="19" height="11.600" rx="2.600" fill="url(#glock)" stroke="#dc9428" stroke-width=".9"/><rect x="911.300" y="72.300" width="16.500" height="13.300" fill="#c9e6fa" stroke="#8cb2d2" stroke-width="1"/><rect x="916.500" y="65.200" width="16.300" height="13.300" fill="#f5f09c" stroke="#9a9a9a" stroke-width="1"/><path d="M929.100 82.200H935.800L932.450 86.200Z" fill="#333"/><path d="M950.300 66.200V84.100" stroke="#444" stroke-width="1.1"/><rect x="952.200" y="64.400" width="13.500" height="10.100" fill="#c9e6fa" stroke="#7fa6c8" stroke-width="1"/><rect x="952.200" y="76.500" width="11.500" height="8" fill="#c7f6c7" stroke="#7fb880" stroke-width="1"/><path d="M967.100 82.200H973.800L970.450 86.200Z" fill="#333"/></g></svg>
<!-- canvas -->
<div id="main" class="a" style="left:57px;top:130px;width:854px;height:665px;background:#d8d8d8;overflow:hidden"></div>
<div class="a" style="left:77px;top:170px;width:833px;height:591px;background:#989898"></div>
<div class="a" style="left:75px;top:168px;width:830px;height:587px;background:#fff"></div>
<div class="a" style="left:73px;top:780px;width:838px;height:15px;background:#fafafa"></div>
<div class="a" style="left:78px;top:784px;width:830px;height:8px;border-radius:4px;background:#c1c1c1"></div>
<div class="a t" style="left:290px;top:610px;width:398px;text-align:center;font:bold 23.6px/28px 'Liberation Sans',sans-serif;letter-spacing:.1px;-webkit-text-stroke:.35px #000">KEBON BAWANG</div>
<svg class="a" style="left:170px;top:207px" width="640" height="383" viewBox="170 207 640 383">
<defs><filter id="ls" x="-5%" y="-5%" width="110%" height="110%"><feMorphology in="SourceAlpha" operator="dilate" radius="1" result="d"/><feGaussianBlur in="d" stdDeviation="0.45" result="db"/><feComponentTransfer in="db" result="dh"><feFuncA type="linear" slope="1.6"/></feComponentTransfer><feFlood flood-color="#fff"/><feComposite in2="dh" operator="in" result="halo"/><feGaussianBlur in="d" stdDeviation="0.9"/><feOffset dx="1" dy="1.3" result="so"/><feFlood flood-color="#000" flood-opacity=".55"/><feComposite in2="so" operator="in" result="sh"/><feMerge><feMergeNode in="sh"/><feMergeNode in="halo"/><feMergeNode in="SourceGraphic"/></feMerge></filter><linearGradient id="bo" x1="0" y1="1" x2="1" y2="0"><stop offset="0" stop-color="#b53b00"/><stop offset=".4" stop-color="#e8601a"/><stop offset=".75" stop-color="#fba56d"/><stop offset="1" stop-color="#ffe6d0"/></linearGradient><linearGradient id="bd" x1="0" y1="0" x2="1" y2="1"><stop offset="0" stop-color="#c44a08"/><stop offset="1" stop-color="#7c2500"/></linearGradient></defs>
<rect x="170" y="207" width="640" height="383" fill="#d8d882"/>
<path fill="#b1d882" d="M296 274H404.6V490H350V435.7H296Z M621.3 274H810V490H621.3Z M170 490H350V590H170Z M404.6 490H810V590H404.6Z"/>
<g fill="none" stroke-linejoin="round" stroke-linecap="round"><path d="M168.0 236.6 L360.0 238.3 L500.0 238.8 L598.3 239.0 L632.0 224.4 M199.8 205.0 L199.8 215.5 M357.6 205.0 L357.6 216.5 M168.0 288.2 L225.0 291.2 L260.0 292.3 L300.0 294.0 L331.5 296.6 L347.8 299.6 L365.0 303.2 L421.0 315.3 L480.0 328.0 L536.0 340.1 L580.0 350.2 L612.0 357.6 L626.0 359.0 L812.0 359.0 M349.0 300.5 L346.6 351.2 L339.3 401.0 M168.0 345.1 L325.9 347.6 L402.7 356.1 M168.0 380.3 L318.5 401.0 L385.6 409.5 M445.5 238.0 L420.2 311.5 L390.2 400.0 L344.0 538.8 L344.3 545.0 L356.0 592.0 M460.0 238.5 L435.5 315.1 L406.2 400.0 L356.0 543.7 L356.3 551.0 L370.5 592.0 M416.0 372.4 L480.0 384.1 L524.0 392.2 L570.0 398.0 L600.0 400.4 L628.0 401.0 L781.0 404.6 M168.0 427.4 L230.7 441.2 L367.3 463.2 M168.0 487.4 L300.0 499.8 L355.0 506.6 L366.0 510.0 L420.4 522.7 L487.8 523.6 L530.0 527.8 L560.0 532.0 L611.7 537.6 L781.0 546.0 M168.0 545.4 L222.0 545.4 L343.0 551.5 M356.3 552.2 L500.0 562.0 L608.0 570.5 L777.6 581.5 M403.0 412.2 L492.1 443.8 L512.2 446.8 L560.0 450.3 L598.3 451.0 L781.0 449.8 M388.5 454.4 L490.7 481.8 L502.2 482.7 L545.0 484.0 L589.8 486.5 L620.0 491.2 L781.0 496.6 M632.4 205.0 L631.2 273.0 L629.3 356.0 L628.0 401.0 L625.4 451.0 L621.0 492.4 L619.0 538.8 L608.0 569.3 L609.3 592.0 M781.7 205.0 L781.7 497.3 L782.4 546.0 L778.0 582.7 L778.0 592.0 M632.4 270.2 L703.0 274.4 L781.7 278.0 L812.0 278.0 M631.2 318.3 L702.0 315.9 L781.7 312.7 L812.0 311.0 M508.2 297.6 L630.0 296.8 M782.0 382.5 L812.0 381.4 M782.0 419.3 L812.0 415.6 M782.0 530.2 L812.0 530.2" stroke="#7c7c66" stroke-opacity=".62" stroke-width="4.5" transform="translate(0 .3)"/><path d="M168.0 236.6 L360.0 238.3 L500.0 238.8 L598.3 239.0 L632.0 224.4 M199.8 205.0 L199.8 215.5 M357.6 205.0 L357.6 216.5 M168.0 288.2 L225.0 291.2 L260.0 292.3 L300.0 294.0 L331.5 296.6 L347.8 299.6 L365.0 303.2 L421.0 315.3 L480.0 328.0 L536.0 340.1 L580.0 350.2 L612.0 357.6 L626.0 359.0 L812.0 359.0 M349.0 300.5 L346.6 351.2 L339.3 401.0 M168.0 345.1 L325.9 347.6 L402.7 356.1 M168.0 380.3 L318.5 401.0 L385.6 409.5 M445.5 238.0 L420.2 311.5 L390.2 400.0 L344.0 538.8 L344.3 545.0 L356.0 592.0 M460.0 238.5 L435.5 315.1 L406.2 400.0 L356.0 543.7 L356.3 551.0 L370.5 592.0 M416.0 372.4 L480.0 384.1 L524.0 392.2 L570.0 398.0 L600.0 400.4 L628.0 401.0 L781.0 404.6 M168.0 427.4 L230.7 441.2 L367.3 463.2 M168.0 487.4 L300.0 499.8 L355.0 506.6 L366.0 510.0 L420.4 522.7 L487.8 523.6 L530.0 527.8 L560.0 532.0 L611.7 537.6 L781.0 546.0 M168.0 545.4 L222.0 545.4 L343.0 551.5 M356.3 552.2 L500.0 562.0 L608.0 570.5 L777.6 581.5 M403.0 412.2 L492.1 443.8 L512.2 446.8 L560.0 450.3 L598.3 451.0 L781.0 449.8 M388.5 454.4 L490.7 481.8 L502.2 482.7 L545.0 484.0 L589.8 486.5 L620.0 491.2 L781.0 496.6 M632.4 205.0 L631.2 273.0 L629.3 356.0 L628.0 401.0 L625.4 451.0 L621.0 492.4 L619.0 538.8 L608.0 569.3 L609.3 592.0 M781.7 205.0 L781.7 497.3 L782.4 546.0 L778.0 582.7 L778.0 592.0 M632.4 270.2 L703.0 274.4 L781.7 278.0 L812.0 278.0 M631.2 318.3 L702.0 315.9 L781.7 312.7 L812.0 311.0 M508.2 297.6 L630.0 296.8 M782.0 382.5 L812.0 381.4 M782.0 419.3 L812.0 415.6 M782.0 530.2 L812.0 530.2" stroke="#fcfcfc" stroke-width="3.2"/></g>
<g class="ml" font-weight="bold" font-size="8" text-anchor="middle" fill="#000" stroke="#000" stroke-width=".42" style="letter-spacing:0" filter="url(#ls)">
<text transform="translate(287.3 295.1) rotate(6.3)" y="2.8">Swasembada Barat 26</text>
<text transform="translate(283.2 345.9) rotate(2.9)" y="2.8">Swasembada Barat 25</text>
<text transform="translate(277.0 395.9) rotate(6.2)" y="2.8">Swasembada Barat 24</text>
<text transform="translate(271.0 447.8) rotate(9.2)" y="2.8">Swasembada Barat 23</text>
<text transform="translate(257.6 496.1) rotate(5.6)" y="2.8">Swasembada Barat 22</text>
<text transform="translate(264.4 547.1) rotate(3.6)" y="2.8">Swasembada Barat 21</text>
<text transform="translate(577.3 349.3) rotate(14.1)" y="2.8">Swasembada Timur 26</text>
<text transform="translate(566.6 396.8) rotate(5.8)" y="2.8">Swasembada Timur 25</text>
<text transform="translate(554.9 448.3) rotate(3.6)" y="2.8">Swasembada Timur 24</text>
<text transform="translate(545.9 483.2) rotate(5.3)" y="2.8">Swasembada Timur 23</text>
<text transform="translate(568.3 533.2) rotate(7.0)" y="2.8">Swasembada Timur 22</text>
<text transform="translate(525.1 565.2) rotate(5.4)" y="2.8">Swasembada Timur 21</text>
<text transform="translate(723.2 275.1) rotate(5.0)" y="2.8">Swadaya 1</text>
<text transform="translate(722.9 315.1) rotate(-2.4)" y="2.8">Swadaya 2</text>
<text transform="translate(432.9 273.6) rotate(-72)" y="2.8">Swasembada Barat</text>
<text transform="translate(448.0 274.6) rotate(-72)" y="2.8">Swasembada Timur</text>
</g>
</svg>
<div class="a" style="left:440px;top:265px;width:38px;height:52px;clip-path:polygon(15.4px 1.9px,36.4px 5.4px,23.7px 50.9px,1.8px 41.7px);background:conic-gradient(from 144.5deg at 18.9px 25.9px,#7e2800 0,#b23c00 8%,#d44c04 18%,#e65a10 30%,#f27828 42%,#fa9850 52%,#fdb888 62%,#fed6b4 74%,#ffe8d4 88%,#fff 100%)"></div>
<div class="a" style="left:474px;top:255px;width:56px;height:61px;clip-path:polygon(8.9px 2.7px,54.9px 1.8px,54.9px 15.8px,26.0px 15.8px,19.9px 60.0px,1.1px 57.8px);background:conic-gradient(from 135deg at 22.1px 25.0px,#7e2800 0,#b23c00 8%,#d44c04 18%,#e65a10 30%,#f27828 42%,#fa9850 52%,#fdb888 62%,#fed6b4 74%,#ffe8d4 88%,#fff 100%)"></div>
<div class="a" style="left:709px;top:279px;width:29px;height:25px;clip-path:polygon(4.9px 1.9px,27.8px 4.1px,24.8px 23.2px,1.6px 19.6px);background:conic-gradient(from 135deg at 14.4px 11.7px,#7e2800 0,#b23c00 8%,#d44c04 18%,#e65a10 30%,#f27828 42%,#fa9850 52%,#fdb888 62%,#fed6b4 74%,#ffe8d4 88%,#fff 100%)"></div>
<div class="a" style="left:265px;top:405px;width:17px;height:15px;clip-path:polygon(3.2px 1.1px,15.1px 3.2px,13.0px 13.6px,1.1px 11.8px);background:conic-gradient(from 135deg at 8.0px 7.2px,#7e2800 0,#b23c00 8%,#d44c04 18%,#e65a10 30%,#f27828 42%,#fa9850 52%,#fdb888 62%,#fed6b4 74%,#ffe8d4 88%,#fff 100%)"></div>
<svg class="a" style="left:57px;top:130px" width="854" height="15" viewBox="57 130 854 15" shape-rendering="crispEdges"><rect x="57" y="130" width="854" height="15" fill="#efefef"/><path d="M75 130v15h1v-15zM80 142v3h1v-3zM86 142v3h1v-3zM92 142v3h1v-3zM97 142v3h1v-3zM103 140v5h1v-5zM108 142v3h1v-3zM114 142v3h1v-3zM119 142v3h1v-3zM125 142v3h1v-3zM131 130v15h1v-15zM136 142v3h1v-3zM142 142v3h1v-3zM147 142v3h1v-3zM153 142v3h1v-3zM159 140v5h1v-5zM164 142v3h1v-3zM170 142v3h1v-3zM175 142v3h1v-3zM181 142v3h1v-3zM187 130v15h1v-15zM192 142v3h1v-3zM198 142v3h1v-3zM203 142v3h1v-3zM209 142v3h1v-3zM214 140v5h1v-5zM220 142v3h1v-3zM226 142v3h1v-3zM231 142v3h1v-3zM237 142v3h1v-3zM242 130v15h1v-15zM248 142v3h1v-3zM254 142v3h1v-3zM259 142v3h1v-3zM265 142v3h1v-3zM270 140v5h1v-5zM276 142v3h1v-3zM281 142v3h1v-3zM287 142v3h1v-3zM293 142v3h1v-3zM298 130v15h1v-15zM304 142v3h1v-3zM309 142v3h1v-3zM315 142v3h1v-3zM321 142v3h1v-3zM326 140v5h1v-5zM332 142v3h1v-3zM337 142v3h1v-3zM343 142v3h1v-3zM348 142v3h1v-3zM354 130v15h1v-15zM360 142v3h1v-3zM365 142v3h1v-3zM371 142v3h1v-3zM376 142v3h1v-3zM382 140v5h1v-5zM388 142v3h1v-3zM393 142v3h1v-3zM399 142v3h1v-3zM404 142v3h1v-3zM410 130v15h1v-15zM416 142v3h1v-3zM421 142v3h1v-3zM427 142v3h1v-3zM432 142v3h1v-3zM438 140v5h1v-5zM443 142v3h1v-3zM449 142v3h1v-3zM455 142v3h1v-3zM460 142v3h1v-3zM466 130v15h1v-15zM471 142v3h1v-3zM477 142v3h1v-3zM483 142v3h1v-3zM488 142v3h1v-3zM494 140v5h1v-5zM499 142v3h1v-3zM505 142v3h1v-3zM510 142v3h1v-3zM516 142v3h1v-3zM522 130v15h1v-15zM527 142v3h1v-3zM533 142v3h1v-3zM538 142v3h1v-3zM544 142v3h1v-3zM550 140v5h1v-5zM555 142v3h1v-3zM561 142v3h1v-3zM566 142v3h1v-3zM572 142v3h1v-3zM578 130v15h1v-15zM583 142v3h1v-3zM589 142v3h1v-3zM594 142v3h1v-3zM600 142v3h1v-3zM605 140v5h1v-5zM611 142v3h1v-3zM617 142v3h1v-3zM622 142v3h1v-3zM628 142v3h1v-3zM633 130v15h1v-15zM639 142v3h1v-3zM645 142v3h1v-3zM650 142v3h1v-3zM656 142v3h1v-3zM661 140v5h1v-5zM667 142v3h1v-3zM672 142v3h1v-3zM678 142v3h1v-3zM684 142v3h1v-3zM689 130v15h1v-15zM695 142v3h1v-3zM700 142v3h1v-3zM706 142v3h1v-3zM712 142v3h1v-3zM717 140v5h1v-5zM723 142v3h1v-3zM728 142v3h1v-3zM734 142v3h1v-3zM739 142v3h1v-3zM745 130v15h1v-15zM751 142v3h1v-3zM756 142v3h1v-3zM762 142v3h1v-3zM767 142v3h1v-3zM773 140v5h1v-5zM779 142v3h1v-3zM784 142v3h1v-3zM790 142v3h1v-3zM795 142v3h1v-3zM801 130v15h1v-15zM807 142v3h1v-3zM812 142v3h1v-3zM818 142v3h1v-3zM823 142v3h1v-3zM829 140v5h1v-5zM834 142v3h1v-3zM840 142v3h1v-3zM846 142v3h1v-3zM851 142v3h1v-3zM857 130v15h1v-15zM862 142v3h1v-3zM868 142v3h1v-3zM874 142v3h1v-3zM879 142v3h1v-3zM885 140v5h1v-5zM890 142v3h1v-3zM896 142v3h1v-3zM901 142v3h1v-3zM907 142v3h1v-3z" fill="#000"/><rect x="171" y="130" width="1" height="15" fill="#f00"/><g font-size="7.6" fill="#101020" style="letter-spacing:0" shape-rendering="auto"><text x="76.3" y="138">0</text><text x="132.3" y="138">20</text><text x="188.3" y="138">40</text><text x="243.3" y="138">60</text><text x="299.3" y="138">80</text><text x="355.3" y="138">100</text><text x="411.3" y="138">120</text><text x="467.3" y="138">140</text><text x="523.3" y="138">160</text><text x="579.3" y="138">180</text><text x="634.3" y="138">200</text><text x="690.3" y="138">220</text><text x="746.3" y="138">240</text><text x="802.3" y="138">260</text><text x="858.3" y="138">280</text></g></svg>
<svg class="a" style="left:57px;top:145px" width="16" height="650" viewBox="57 145 16 650" shape-rendering="crispEdges"><rect x="57" y="145" width="16" height="650" fill="#efefef"/><path d="M70 145h3v1h-3zM70 151h3v1h-3zM70 157h3v1h-3zM70 162h3v1h-3zM57 168h16v1h-16zM70 173h3v1h-3zM70 179h3v1h-3zM70 184h3v1h-3zM70 190h3v1h-3zM68 196h5v1h-5zM70 201h3v1h-3zM70 207h3v1h-3zM70 212h3v1h-3zM70 218h3v1h-3zM57 224h16v1h-16zM70 229h3v1h-3zM70 235h3v1h-3zM70 240h3v1h-3zM70 246h3v1h-3zM68 251h5v1h-5zM70 257h3v1h-3zM70 263h3v1h-3zM70 268h3v1h-3zM70 274h3v1h-3zM57 279h16v1h-16zM70 285h3v1h-3zM70 291h3v1h-3zM70 296h3v1h-3zM70 302h3v1h-3zM68 307h5v1h-5zM70 313h3v1h-3zM70 319h3v1h-3zM70 324h3v1h-3zM70 330h3v1h-3zM57 335h16v1h-16zM70 341h3v1h-3zM70 346h3v1h-3zM70 352h3v1h-3zM70 358h3v1h-3zM68 363h5v1h-5zM70 369h3v1h-3zM70 374h3v1h-3zM70 380h3v1h-3zM70 386h3v1h-3zM57 391h16v1h-16zM70 397h3v1h-3zM70 402h3v1h-3zM70 408h3v1h-3zM70 413h3v1h-3zM68 419h5v1h-5zM70 425h3v1h-3zM70 430h3v1h-3zM70 436h3v1h-3zM70 441h3v1h-3zM57 447h16v1h-16zM70 453h3v1h-3zM70 458h3v1h-3zM70 464h3v1h-3zM70 469h3v1h-3zM68 475h5v1h-5zM70 480h3v1h-3zM70 486h3v1h-3zM70 492h3v1h-3zM70 497h3v1h-3zM57 503h16v1h-16zM70 508h3v1h-3zM70 514h3v1h-3zM70 520h3v1h-3zM70 525h3v1h-3zM68 531h5v1h-5zM70 536h3v1h-3zM70 542h3v1h-3zM70 548h3v1h-3zM70 553h3v1h-3zM57 559h16v1h-16zM70 564h3v1h-3zM70 570h3v1h-3zM70 575h3v1h-3zM70 581h3v1h-3zM68 587h5v1h-5zM70 592h3v1h-3zM70 598h3v1h-3zM70 603h3v1h-3zM70 609h3v1h-3zM57 615h16v1h-16zM70 620h3v1h-3zM70 626h3v1h-3zM70 631h3v1h-3zM70 637h3v1h-3zM68 642h5v1h-5zM70 648h3v1h-3zM70 654h3v1h-3zM70 659h3v1h-3zM70 665h3v1h-3zM57 670h16v1h-16zM70 676h3v1h-3zM70 682h3v1h-3zM70 687h3v1h-3zM70 693h3v1h-3zM68 698h5v1h-5zM70 704h3v1h-3zM70 710h3v1h-3zM70 715h3v1h-3zM70 721h3v1h-3zM57 726h16v1h-16zM70 732h3v1h-3zM70 737h3v1h-3zM70 743h3v1h-3zM70 749h3v1h-3zM68 754h5v1h-5zM70 760h3v1h-3zM70 765h3v1h-3zM70 771h3v1h-3zM70 777h3v1h-3zM57 782h16v1h-16zM70 788h3v1h-3zM70 793h3v1h-3z" fill="#000"/><rect x="57" y="146" width="14" height="1" fill="#f00"/><g font-size="7.6" fill="#101020" style="letter-spacing:0" shape-rendering="auto"><text transform="translate(66 170.6) rotate(-90)" text-anchor="end">0</text><text transform="translate(66 226.6) rotate(-90)" text-anchor="end">20</text><text transform="translate(66 281.6) rotate(-90)" text-anchor="end">40</text><text transform="translate(66 337.6) rotate(-90)" text-anchor="end">60</text><text transform="translate(66 393.6) rotate(-90)" text-anchor="end">80</text><text transform="translate(66 449.6) rotate(-90)" text-anchor="end">100</text><text transform="translate(66 505.6) rotate(-90)" text-anchor="end">120</text><text transform="translate(66 561.6) rotate(-90)" text-anchor="end">140</text><text transform="translate(66 617.6) rotate(-90)" text-anchor="end">160</text><text transform="translate(66 672.6) rotate(-90)" text-anchor="end">180</text><text transform="translate(66 728.6) rotate(-90)" text-anchor="end">200</text><text transform="translate(66 784.6) rotate(-90)" text-anchor="end">220</text></g></svg>
<!-- right dock -->
<div id="right" class="a" style="left:910px;top:130px;width:427px;height:665px;background:#ededed"></div><div class="a" style="left:910px;top:130px;width:1px;height:665px;background:#b8b8b8"></div><div class="a" style="left:911px;top:130px;width:2px;height:665px;background:#969696"></div>

<div class="a dt" style="top:129px;height:27px"><span class="a" style="top:6px;letter-spacing:-0.25px">Command history</span></div>
<svg class="a cb" style="left:915px;top:134px" viewBox="0 0 14 14"><circle cx="7" cy="7" r="7" fill="#464646"/><path d="M4 4L10 10M10 4L4 10" stroke="#fff" stroke-width="2"/></svg>
<div class="a" style="left:912px;top:156px;width:425px;height:102px;background:#fff"></div>
<div class="a row" style="top:156px;letter-spacing:-0.34px">Change item size</div>
<div class="a row" style="top:174px;letter-spacing:-0.36px">Label text changed</div>
<div class="a row" style="top:192px;letter-spacing:-0.35px">Label font changed</div>
<div class="a row" style="top:210px;letter-spacing:-0.36px">Label alignment changed</div>
<div class="a row" style="top:228px;background:#3873d6;color:#fff;letter-spacing:-0.34px">Change item size</div>
<div class="a" style="left:1321px;top:156px;width:16px;height:102px;background:linear-gradient(90deg,#f3f3f3,#fcfcfc);border-left:1px solid #e6e6e6"></div>
<div class="a" style="left:1325px;top:217px;width:8px;height:40px;border-radius:4px;background:#c1c1c1"></div>
<div class="a" style="left:912px;top:258px;width:425px;height:2px;background:linear-gradient(#ababab,#c2c2c2)"></div>
<!-- tab bar -->
<svg class="a" style="left:912px;top:259px" width="425" height="23" viewBox="912 259 425 23" fill="none"><path d="M912.5 282V275Q912.5 270.5 917 270.5H950M1300 270.5H1332Q1336.5 270.5 1336.5 275V282" stroke="#b9b9b9" stroke-width="1.600"/><path d="M913 282V275.5Q913 271 917.5 271H950V282Z M1300 271H1331.500Q1336 271 1336 275.500V282H1300Z" fill="#e3e3e3"/></svg>
<div class="a" style="left:950px;top:260px;width:349px;height:21px;border:1px solid #9a9a9a;border-radius:4px;background:linear-gradient(#fff,#f7f7f7 50%,#ececec);box-shadow:0 1px 0 rgba(255,255,255,.6)"></div>
<div class="a" style="left:1171px;top:260px;width:128px;height:21px;border:1px solid #7a7a7a;border-radius:0 4px 4px 0;background:linear-gradient(#7b7b7b,#969696 50%,#a3a3a3)"></div>
<div class="a" style="left:1052px;top:263px;width:1px;height:15px;background:#c4c4c4"></div>
<div class="a t" style="left:949px;top:262px;width:102px;text-align:center;letter-spacing:-0.28px">Composition</div>
<div class="a t" style="left:1053px;top:262px;width:118px;text-align:center;letter-spacing:-0.35px">Item Properties</div>
<div class="a t" style="left:1172px;top:262px;width:129px;text-align:center;color:#fff;text-shadow:0 1px 0 rgba(0,0,0,.35);letter-spacing:-0.34px">Atlas generation</div>
<!-- atlas dock -->
<div class="a dt" style="top:282px;height:26px"><span class="a" style="top:5px;letter-spacing:-0.24px">Atlas generation</span></div>
<svg class="a cb" style="left:915px;top:286px" viewBox="0 0 14 14"><circle cx="7" cy="7" r="7" fill="#464646"/><path d="M4 4L10 10M10 4L4 10" stroke="#fff" stroke-width="2"/></svg>
<div class="a chk" style="left:925px;top:314px;background:linear-gradient(#dcebfb,#9fc6ee 50%,#7fb2e8 51%,#c5e2fb);border-color:#5f7d9f"></div>
<svg class="a" style="left:925px;top:309px" width="18" height="19" viewBox="0 0 18 19" fill="none"><path d="M3.6 11.2L6.8 15L13.2 3.2" stroke="#10182a" stroke-width="2.7" stroke-linecap="round" stroke-linejoin="round"/></svg>
<div class="a t" style="left:943px;top:313px;letter-spacing:-0.52px">Generate an atlas</div>
<!-- scroll area -->
<div class="a" style="left:913px;top:334px;width:424px;height:1px;background:#929292"></div>
<div class="a" style="left:913px;top:335px;width:1px;height:445px;background:#bdbdbd"></div>
<div class="a tri-d" style="left:928px;top:349px"></div><div class="a t" style="left:948px;top:344px;letter-spacing:-0.20px">Configuration</div>
<div class="a gb" style="top:362px;height:88px"></div>
<div class="a t" style="left:939px;top:380px;letter-spacing:-0.35px">Composer map</div>
<div class="a combo" style="left:1045px;top:379px;width:275px;letter-spacing:-0.54px">Map 0</div>
<div class="a t" style="left:939px;top:416px;letter-spacing:-0.48px">Coverage layer</div>
<div class="a combo" style="left:1045px;top:415px;width:275px;letter-spacing:-0.25px">batas_rw_banjir_2007</div>
<div class="a tri-d" style="left:928px;top:475px"></div><div class="a t" style="left:948px;top:470px;letter-spacing:-0.14px">Visibility</div>
<div class="a gb" style="top:489px;height:38px"></div>
<div class="a chk" style="left:939px;top:501px"></div>
<div class="a t" style="left:957px;top:500px;letter-spacing:-0.45px">Hidden coverage layer</div>
<div class="a tri-r" style="left:931px;top:549px"></div><div class="a t" style="left:948px;top:547px;letter-spacing:-0.25px">Feature sorting</div>
<div class="a tri-r" style="left:931px;top:579px"></div><div class="a t" style="left:948px;top:577px;letter-spacing:-0.24px">Feature filtering</div>
<div class="a tri-d" style="left:928px;top:612px"></div><div class="a t" style="left:948px;top:607px;letter-spacing:-0.58px">Scaling</div>
<div class="a gb" style="top:626px;height:73px"></div>
<div class="a rad" style="left:938px;top:644px;background:linear-gradient(#cfe4fa,#8fbdee 50%,#78aee8 51%,#c5e2fb);border-color:#4f6f96"></div>
<div class="a" style="left:943.500px;top:649.500px;width:5px;height:5px;border-radius:3px;background:#1c1c1c"></div>
<div class="a t" style="left:958px;top:643px;letter-spacing:-0.24px">Margin around feature</div>
<div class="a" style="left:1115px;top:640px;width:205px;height:21px;background:#fff;border:1px solid #9f9f9f;border-right:none;border-top-color:#7e7e7e;padding-left:3px;line-height:20px;white-space:nowrap;letter-spacing:-0.70px">10%</div>
<div class="a rad" style="left:938px;top:673px"></div>
<div class="a t" style="left:958px;top:672px;letter-spacing:-0.23px">Fixed scale</div>
<div class="a tri-d" style="left:928px;top:724px"></div><div class="a t" style="left:948px;top:719px;letter-spacing:-0.20px">Output</div>
<div class="a gb" style="top:737px;height:50px;border-bottom:none;border-radius:4px 0 0 0"></div>
<div class="a t" style="left:939px;top:750px;letter-spacing:-0.22px">Output filename expression</div>
<div class="a" style="left:951px;top:777px;width:369px;height:4px;background:#fff;border-top:1px solid #7e7e7e;border-left:1px solid #9f9f9f"></div>
<!-- scrollbars -->
<div class="a" style="left:1320px;top:335px;width:17px;height:445px;background:linear-gradient(90deg,#f3f3f3,#fcfcfc);border-left:1px solid #e6e6e6"></div>
<div class="a" style="left:1324px;top:336px;width:8px;height:383px;border-radius:4px;background:#c1c1c1"></div>
<div class="a" style="left:913px;top:780px;width:424px;height:15px;background:linear-gradient(#f3f3f3,#fcfcfc);border-top:1px solid #e6e6e6"></div>
<div class="a" style="left:915px;top:784px;width:233px;height:8px;border-radius:4px;background:#c1c1c1"></div>
<div class="a" style="left:1320px;top:780px;width:17px;height:15px;background:#fff;border-left:1px solid #e0e0e0;border-top:1px solid #e0e0e0"></div>
<div id="status" class="a">
 <span class="a t" style="left:2px;top:11px;letter-spacing:-0.20px">x: 34.3433 mm</span><span class="a t" style="left:108px;top:11px;letter-spacing:-0.43px">y: 0 mm</span>
 <span class="a t" style="left:214px;top:11px;letter-spacing:-0.42px">page: 1</span>
 <div class="a" style="left:320px;top:9px;width:96px;height:21px;border:1px solid #9f9f9f;border-top-color:#7e7e7e;background:#fff;border-radius:0 3px 3px 0"></div>
 <div class="a" style="left:397px;top:10px;width:18px;height:19px;border-left:1px solid #b0b0b0;background:linear-gradient(#fff,#ececec);border-radius:0 3px 3px 0"></div>
 <div class="a" style="left:402.5px;top:17.500px;width:0;height:0;border-left:3.5px solid transparent;border-right:3.5px solid transparent;border-top:4.6px solid #4a4a4a"></div>
 <span class="a t" style="left:323px;top:11px;letter-spacing:-0.70px">98.6%</span>
 <span class="a t" style="left:778px;top:11px;letter-spacing:-0.16px">Atlas feature 3 of 2686</span>
 <svg class="a" style="left:1266px;top:26px" width="13" height="13" viewBox="0 0 13 13"><path d="M1 12L12 1M5 12L12 5M9 12L12 9" stroke="#6a6a6a" stroke-width="1"/><path d="M2 12L12 2M6 12L12 6M10 12L12 10" stroke="#fff" stroke-width="1" opacity=".8"/></svg>
</div>
</body></html>
